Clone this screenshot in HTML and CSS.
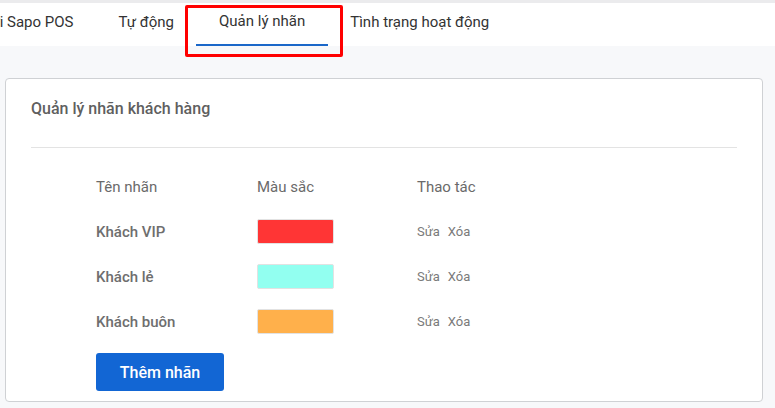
FILE: index.html
```html
<!DOCTYPE html>
<html lang="vi">
<head>
    <meta charset="UTF-8">
    <meta name="viewport" content="width=device-width, initial-scale=1.0">
    <title>Quản lý nhãn</title>
    <link rel="stylesheet" href="styles.css">
</head>
<body>
    <nav class="tabs">
        <a class="tab tab-first"><span>Kết nối với Sapo POS</span></a>
        <a class="tab">Tự động</a>
        <a class="tab active">Quản lý nhãn</a>
        <a class="tab">Tình trạng hoạt động</a>
    </nav>

    <main class="page">
        <section class="card">
            <h2 class="card-title">Quản lý nhãn khách hàng</h2>

            <div class="label-table">
                <div class="th">Tên nhãn</div>
                <div class="th">Màu sắc</div>
                <div class="th">Thao tác</div>

                <div class="name">Khách VIP</div>
                <div><span class="swatch" style="background: #ff3535;"></span></div>
                <div class="actions"><a>Sửa</a><a>Xóa</a></div>

                <div class="name">Khách lẻ</div>
                <div><span class="swatch" style="background: #92fff0;"></span></div>
                <div class="actions"><a>Sửa</a><a>Xóa</a></div>

                <div class="name">Khách buôn</div>
                <div><span class="swatch" style="background: #ffb04b;"></span></div>
                <div class="actions"><a>Sửa</a><a>Xóa</a></div>
            </div>

            <button class="add-button">Thêm nhãn</button>
        </section>
    </main>
</body>
</html>
```

FILE: styles.css
```css
* {
    margin: 0;
    padding: 0;
    box-sizing: border-box;
}

body {
    font-family: Roboto, 'Liberation Sans', sans-serif;
    background: #f7f8fa;
    color: #333;
    overflow: hidden;
}

.tabs {
    display: flex;
    background: #fff;
    border-top: 3px solid #ebebed;
    height: 46px;
}

.tab {
    position: relative;
    display: flex;
    align-items: center;
    height: 43px;
    padding: 0 22.5px 6px;
    font-size: 15px;
    color: #333;
    white-space: nowrap;
    cursor: pointer;
}

.tab-first {
    width: 96px;
    padding-left: 0;
    justify-content: flex-end;
    overflow: hidden;
}

.tab.active {
    border-bottom: 2px solid #1a67c9;
    height: 43px;
}

/* khung đỏ đánh dấu tab đang chọn */
.tab.active::after {
    content: '';
    position: absolute;
    left: -11px;
    right: -15px;
    top: 2px;
    height: 46px;
    border: 3px solid #f00;
    border-radius: 2px;
}

.page {
    padding: 32px 12px 0 5px;
}

.card {
    background: #fff;
    border: 1px solid #cfd1d4;
    border-radius: 4px;
    padding: 20px 25px 10px;
    height: 324px;
}

.card-title {
    font-size: 16px;
    font-weight: 500;
    line-height: 20px;
    color: #5f5f5f;
    padding-bottom: 28px;
    border-bottom: 1px solid #e3e3e3;
}

.label-table {
    display: grid;
    grid-template-columns: 161px 160px auto;
    grid-auto-rows: 45px;
    align-items: center;
    margin: 16px 0 0 65px;
    font-size: 15px;
    color: #666;
}

.th {
    color: #6a6a6a;
}

.name {
    font-weight: 500;
    color: #6e6e6e;
}

.swatch {
    display: block;
    width: 77px;
    height: 25px;
    border: 1px solid #e2e2e2;
    border-radius: 2px;
}

.actions {
    display: flex;
    gap: 8px;
    font-size: 13px;
    color: #7a7a7a;
}

.actions a {
    cursor: pointer;
}

.add-button {
    margin: 9px 0 0 65px;
    width: 128px;
    height: 38px;
    background: #1266d4;
    color: #fff;
    border: none;
    border-radius: 3px;
    font-family: inherit;
    font-size: 16px;
    font-weight: 500;
    cursor: pointer;
}
```
